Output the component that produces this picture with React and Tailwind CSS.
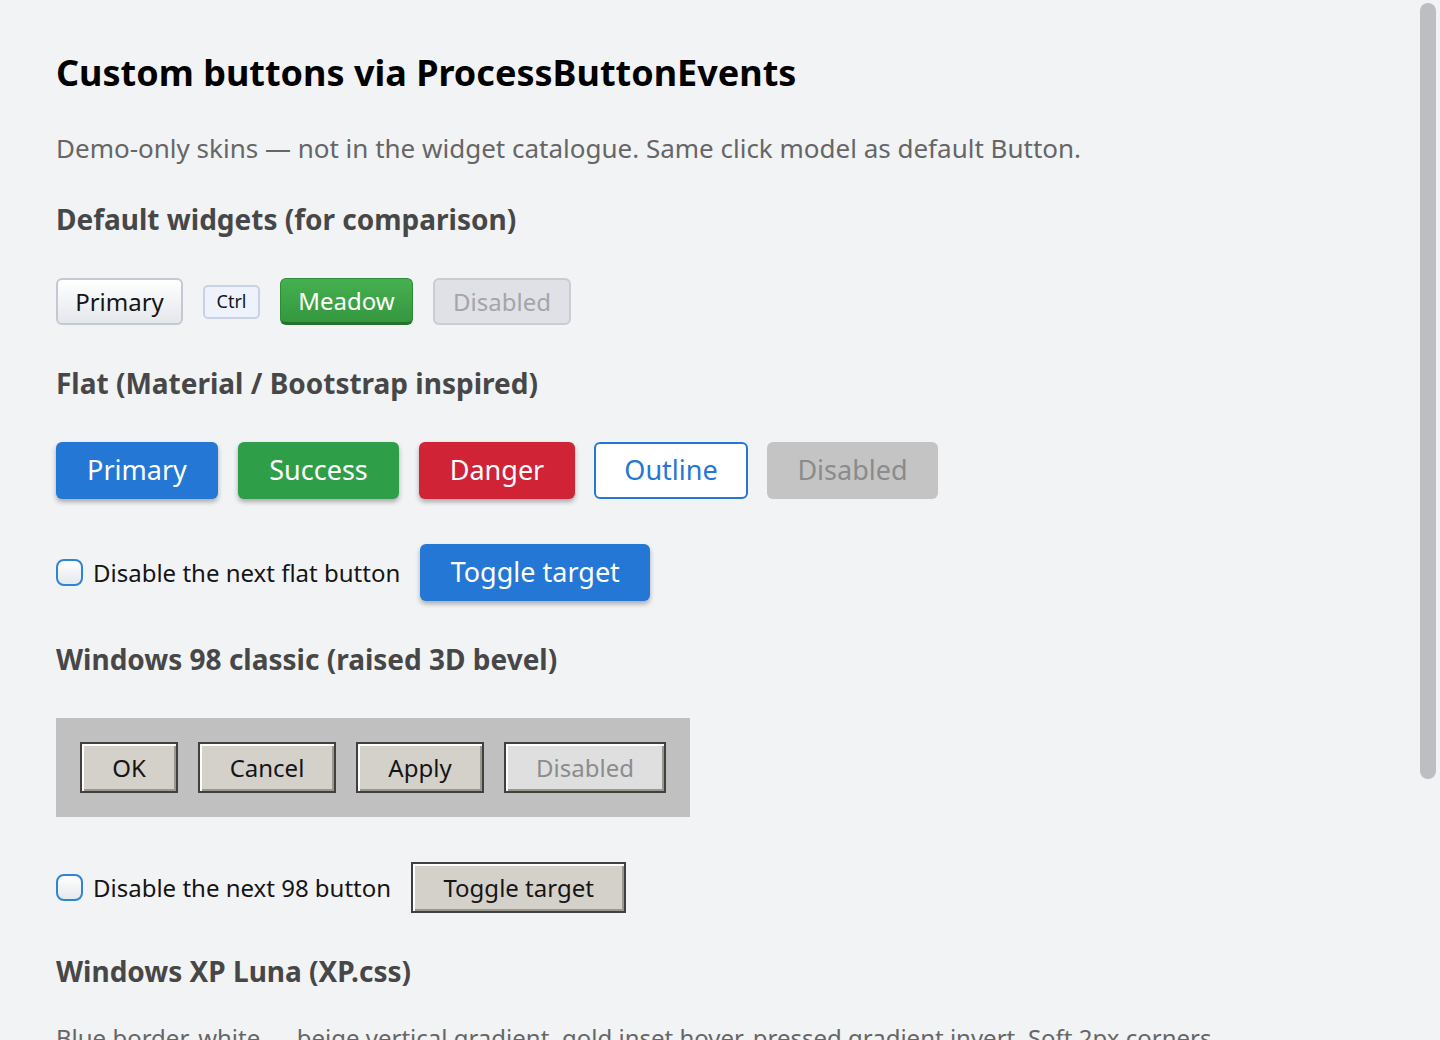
import React, { useState } from "react";

// ===== Default widget skins =====
function DefaultButton({ children, variant = "plain", disabled, className = "" }) {
  if (disabled) {
    return (
      <button className={`h-[47px] rounded-md border-2 border-[#c9ccd3] bg-[#dfe1e6] text-[24px] text-[#a3a5aa] ${className}`}>
        {children}
      </button>
    );
  }
  if (variant === "meadow") {
    return (
      <button className={`h-[47px] rounded-md border border-[#2f8b38] border-b-[3px] border-b-[#24732c] bg-gradient-to-b from-[#45b04f] to-[#35983f] text-[24px] text-white ${className}`}>
        {children}
      </button>
    );
  }
  return (
    <button className={`h-[47px] rounded-md border-2 border-[#c3c8d2] bg-gradient-to-b from-[#ffffff] to-[#e4e7ec] text-[24px] text-[#151515] ${className}`}>
      {children}
    </button>
  );
}

// ===== Flat skins =====
const flatStyles = {
  primary: "bg-[#2477d4] text-white shadow-[0_3px_5px_rgba(0,0,0,0.3)]",
  success: "bg-[#2f9e49] text-white shadow-[0_3px_5px_rgba(0,0,0,0.3)]",
  danger: "bg-[#d02335] text-white shadow-[0_3px_5px_rgba(0,0,0,0.3)]",
  outline: "bg-white text-[#2477d4] border-2 border-[#2477d4]",
  disabled: "bg-[#c4c4c4] text-[#8b8b8b]",
};

function FlatButton({ children, kind = "primary", className = "" }) {
  return (
    <button
      className={`h-[57px] rounded-md text-[27px] ${flatStyles[kind]} ${className}`}
    >
      {children}
    </button>
  );
}

// ===== Windows 98 skin =====
function Win98Button({ children, disabled, className = "" }) {
  return (
    <button
      className={`h-[51px] border-2 border-[#404040] shadow-[inset_2px_2px_0_#ffffff,inset_-2px_-2px_0_#9a978f] text-[24px] ${
        disabled ? "bg-[#dfdfdf] text-[#8c8c8c]" : "bg-[#d4d1cb] text-[#151515]"
      } ${className}`}
    >
      {children}
    </button>
  );
}

function Check({ checked, onChange, label }) {
  return (
    <label className="flex items-center gap-[10px] cursor-pointer">
      <span
        onClick={onChange}
        className={`w-[27px] h-[27px] rounded-[8px] border-2 border-[#2c86d6] ${
          checked ? "bg-[#2c86d6]" : "bg-gradient-to-b from-[#ffffff] to-[#e6e8ec]"
        }`}
      />
      <span className="text-[24px] text-[#151515]">{label}</span>
    </label>
  );
}

function SectionHead({ children, className = "" }) {
  return (
    <h2 className={`text-[28px] font-bold text-[#474747] leading-none ${className}`}>
      {children}
    </h2>
  );
}

export default function App() {
  const [flatOff, setFlatOff] = useState(false);
  const [oldOff, setOldOff] = useState(false);

  return (
    <div className="relative h-[1040px] overflow-hidden bg-[#f2f3f5] font-['Noto_Sans',sans-serif]">
      {/* overlay scrollbar thumb */}
      <div className="absolute right-[4px] top-[3px] w-[16px] h-[776px] rounded-full bg-[#bdbec1]" />

      <div className="pl-[56px] pt-[55px]">
        <h1 className="text-[36px] font-bold text-black leading-none">
          Custom buttons via ProcessButtonEvents
        </h1>
        <p className="mt-[44px] text-[26px] text-[#666666] leading-none">
          Demo-only skins — not in the widget catalogue. Same click model as default Button.
        </p>

        <SectionHead className="mt-[44px]">Default widgets (for comparison)</SectionHead>
        <div className="mt-[45px] flex items-center gap-5">
          <DefaultButton className="w-[127px]">Primary</DefaultButton>
          <button className="h-[34px] w-[57px] rounded-[5px] border-2 border-[#c9d2e4] bg-[#eef2fb] text-[18px] text-[#151515]">
            Ctrl
          </button>
          <DefaultButton variant="meadow" className="w-[133px]">Meadow</DefaultButton>
          <DefaultButton disabled className="w-[138px]">Disabled</DefaultButton>
        </div>

        <SectionHead className="mt-[44px]">Flat (Material / Bootstrap inspired)</SectionHead>
        <div className="mt-[45px] flex items-center gap-5">
          <FlatButton className="w-[162px]">Primary</FlatButton>
          <FlatButton kind="success" className="w-[161px]">Success</FlatButton>
          <FlatButton kind="danger" className="w-[156px]">Danger</FlatButton>
          <FlatButton kind="outline" className="w-[154px] -ml-px">Outline</FlatButton>
          <FlatButton kind="disabled" className="w-[171px] -ml-px">Disabled</FlatButton>
        </div>

        <div className="mt-[45px] flex items-center gap-5">
          <Check checked={flatOff} onChange={() => setFlatOff(!flatOff)} label="Disable the next flat button" />
          <FlatButton kind={flatOff ? "disabled" : "primary"} className="w-[230px]">
            Toggle target
          </FlatButton>
        </div>

        <SectionHead className="mt-[44px]">Windows 98 classic (raised 3D bevel)</SectionHead>
        <div className="mt-[45px] w-[634px] bg-[#c0c0c0] p-[24px] flex gap-5">
          <Win98Button className="w-[98px]">OK</Win98Button>
          <Win98Button className="w-[138px]">Cancel</Win98Button>
          <Win98Button className="w-[128px]">Apply</Win98Button>
          <Win98Button disabled className="w-[162px]">Disabled</Win98Button>
        </div>

        <div className="mt-[45px] flex items-center gap-5">
          <Check checked={oldOff} onChange={() => setOldOff(!oldOff)} label="Disable the next 98 button" />
          <Win98Button disabled={oldOff} className="w-[215px]">Toggle target</Win98Button>
        </div>

        <SectionHead className="mt-[44px]">Windows XP Luna (XP.css)</SectionHead>
        <p className="mt-[41px] text-[24px] text-[#666666] leading-none whitespace-nowrap">
          Blue border, white → beige vertical gradient, gold inset hover, pressed gradient invert. Soft 2px corners.
        </p>
      </div>
    </div>
  );
}
